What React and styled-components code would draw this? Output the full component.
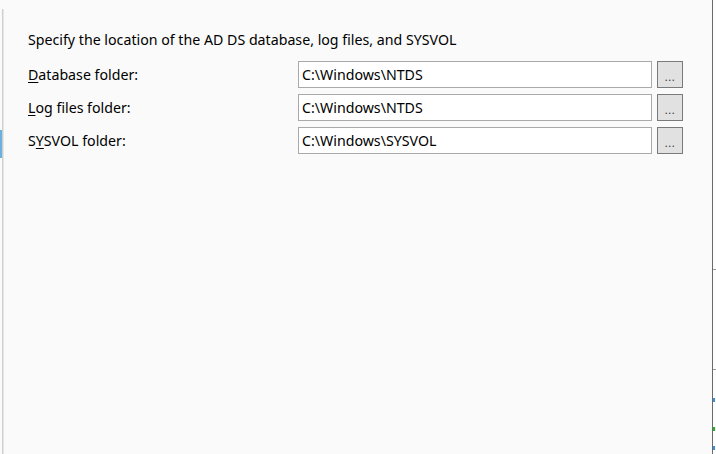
import React from "react";
import styled, { createGlobalStyle } from "styled-components";

const Global = createGlobalStyle`
  html, body { margin: 0; padding: 0; background: #fafafa; }
  body { font-family: "Segoe UI", "Noto Sans", "Open Sans", sans-serif; }
  #root { height: 454px; }
`;

const Page = styled.div`
  display: flex;
  height: 454px;
  width: 716px;
  background: #fafafa;
  overflow: hidden;
`;

/* left pane edge: thin gray divider with the active-page blue marker */
const LeftRail = styled.div`
  width: 4px;
  flex: none;
  background:
    linear-gradient(#6cb0e0, #6cb0e0) 0 130px / 2px 28px no-repeat,
    linear-gradient(#cfcfcf, #cfcfcf) 2px 9px / 1px 100% no-repeat,
    linear-gradient(#e6e6e6, #e6e6e6) 3px 9px / 1px 100% no-repeat;
`;

const Content = styled.div`
  flex: 1;
  padding: 30px 0 0 24px;
  box-sizing: border-box;
  color: #000;
  font-size: 14.2px;
`;

const Heading = styled.div`
  line-height: 20px;
  height: 20px;
  margin-bottom: 11px;
`;

const Grid = styled.div`
  display: grid;
  grid-template-columns: 265px 354px 26px;
  column-gap: 5px;
  row-gap: 6px;
  align-items: center;
`;

const Label = styled.label`
  line-height: 20px;
  u { text-decoration: underline; text-underline-offset: 2px; }
`;

const Field = styled.div`
  height: 27px;
  box-sizing: border-box;
  border: 1px solid #a9a9a9;
  background: #fff;
  padding: 0 3px;
  display: flex;
  align-items: center;
  white-space: nowrap;
`;

const Browse = styled.div`
  height: 27px;
  box-sizing: border-box;
  border: 1px solid #7a7a7a;
  background: #e1e1e1;
  display: flex;
  align-items: flex-end;
  justify-content: center;
  padding-bottom: 5px;
  font-size: 11px;
  line-height: 11px;
  color: #333;
  letter-spacing: 0.5px;
`;

/* right window edge with scrollbar fragments peeking in */
const RightEdge = styled.div`
  width: 3px;
  flex: none;
  border-left: 1px solid #6a6a6a;
  background:
    linear-gradient(#9a9a9a, #9a9a9a) 0 269px / 3px 1px no-repeat,
    linear-gradient(#9a9a9a, #9a9a9a) 0 369px / 3px 1px no-repeat,
    linear-gradient(#3c8fd8, #3c8fd8) 0 398px / 2px 4px no-repeat,
    linear-gradient(#1cb81c, #1cb81c) 0 427px / 2px 4px no-repeat,
    linear-gradient(#3c8fd8, #3c8fd8) 0 446px / 2px 4px no-repeat,
    #fdfdfd;
`;

const rows = [
  { pre: "", key: "D", post: "atabase folder:", value: "C:\\Windows\\NTDS" },
  { pre: "", key: "L", post: "og files folder:", value: "C:\\Windows\\NTDS" },
  { pre: "S", key: "Y", post: "SVOL folder:", value: "C:\\Windows\\SYSVOL" },
];

export default function App() {
  return (
    <>
      <Global />
      <Page>
        <LeftRail />
        <Content>
          <Heading>Specify the location of the AD DS database, log files, and SYSVOL</Heading>
          <Grid>
            {rows.map((r) => (
              <React.Fragment key={r.post}>
                <Label>
                  {r.pre}
                  <u>{r.key}</u>
                  {r.post}
                </Label>
                <Field>{r.value}</Field>
                <Browse>...</Browse>
              </React.Fragment>
            ))}
          </Grid>
        </Content>
        <RightEdge />
      </Page>
    </>
  );
}
